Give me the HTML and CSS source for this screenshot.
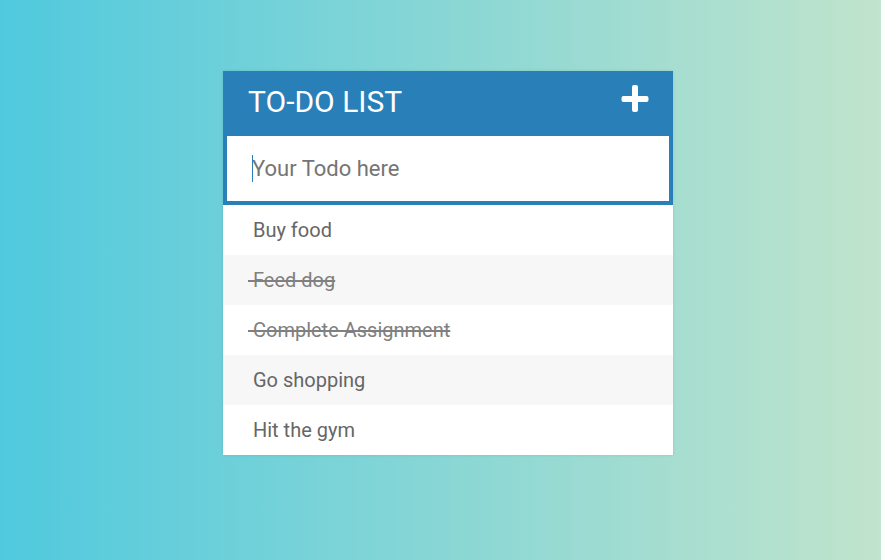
FILE: index.html
```html
<!DOCTYPE html>
<html lang="en">
<head>
<meta charset="utf-8">
<title>Todo List</title>
<link rel="stylesheet" href="styles.css">
</head>
<body>
<main class="container">
  <header class="header">
    <h1 class="title">To-Do List</h1>
    <button class="toggle" type="button" aria-label="Toggle new todo">
      <svg class="plus" viewBox="0 0 28 28" aria-hidden="true"><path fill="currentColor" d="M13 0h2a2 2 0 0 1 2 2v9h8.500a2 2 0 0 1 2 2v2a2 2 0 0 1-2 2H17v8a2 2 0 0 1-2 2h-2a2 2 0 0 1-2-2v-8H2.500a2 2 0 0 1-2-2v-2a2 2 0 0 1 2-2H11V2a2 2 0 0 1 2-2z"/></svg>
    </button>
  </header>
  <div class="field">
    <input class="new-todo" type="text" placeholder="Your Todo here" aria-label="New todo">
    <span class="caret"></span>
  </div>
  <ul class="list">
    <li class="item">&nbsp;Buy food</li>
    <li class="item completed">&nbsp;Feed dog</li>
    <li class="item completed">&nbsp;Complete Assignment</li>
    <li class="item">&nbsp;Go shopping</li>
    <li class="item">&nbsp;Hit the gym</li>
  </ul>
</main>
</body>
</html>
```

FILE: styles.css
```css
* {
  box-sizing: border-box;
}

body {
  margin: 0;
  min-height: 100vh;
  padding: 71px 0 0 15px;
  font-family: Roboto, sans-serif;
  background: linear-gradient(to right, #50c9de, #c0e4cc);
}

.container {
  width: 100%;
  max-width: 450px;
  margin: 0 auto;
  background: #fff;
  box-shadow: 0 0 3px rgba(0, 0, 0, 0.1);
}

.header {
  display: flex;
  justify-content: space-between;
  align-items: center;
  height: 61px;
  padding: 0 24px 0 25px;
  background: #2980b9;
  color: #fff;
}

.title {
  margin: 0;
  font-size: 30px;
  font-weight: 400;
  text-transform: uppercase;
}

.toggle {
  display: flex;
  padding: 0 0 5px;
  border: 0;
  background: none;
  color: inherit;
}

.plus {
  width: 28px;
  height: 28px;
}

.field {
  position: relative;
}

.new-todo {
  display: block;
  width: 100%;
  height: 73px;
  padding: 0 25px;
  border: 4px solid #2980b9;
  border-radius: 0;
  outline: 0;
  background: #fff;
  color: #2980b9;
  font-family: inherit;
  font-size: 22px;
}

.new-todo::placeholder {
  color: #757575;
}

.caret {
  position: absolute;
  top: 23px;
  left: 29px;
  width: 1px;
  height: 27px;
  background: #2980b9;
}

.list {
  margin: 0;
  padding: 0;
  list-style: none;
}

.item {
  height: 50px;
  padding-left: 25px;
  font-size: 20px;
  line-height: 50px;
  color: #666;
}

.item:nth-child(2n) {
  background: #f7f7f7;
}

.completed {
  color: gray;
  text-decoration: line-through;
  text-decoration-thickness: 2px;
}
```
